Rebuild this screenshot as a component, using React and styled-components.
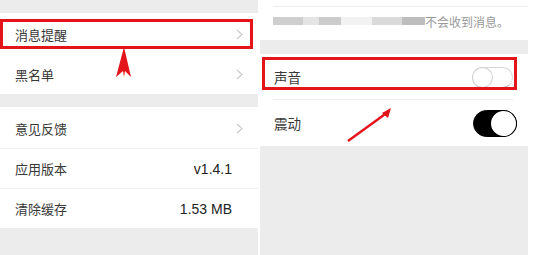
import styled, { createGlobalStyle } from 'styled-components';

const GlobalStyle = createGlobalStyle`
    body {
        margin: 0;
        background: #ffffff;
        font-family: "Liberation Sans", "Noto Sans CJK SC", sans-serif;
    }
`

const Chevron = () => (
    <ChevronIcon width="7" height="11" viewBox="0 0 7 11">
        <polyline points="1,1 6,5.5 1,10" fill="none" stroke="#c9c9c9" strokeWidth="1.1" />
    </ChevronIcon>
)

const SettingRow = ({ label, value, chevron, divider, children }) => (
    <Row $divider={divider}>
        <Label>{label}</Label>
        {value && <Value>{value}</Value>}
        {chevron && <Chevron />}
        {children}
    </Row>
)

const App = () => {
    return (
        <>
            <GlobalStyle />
            <Page>
                <Panel $width={258}>
                    <Spacer $height={13} />
                    <Group>
                        <SettingRow label="消息提醒" chevron>
                            <Highlight $left={0} $top={5} $width={253} $height={30} />
                        </SettingRow>
                        <SettingRow label="黑名单" chevron />
                    </Group>
                    <Spacer $height={13} />
                    <Group>
                        <SettingRow label="意见反馈" chevron />
                        <SettingRow label="应用版本" value="v1.4.1" divider />
                        <SettingRow label="清除缓存" value="1.53 MB" divider />
                    </Group>
                    <Overlay width="258" height="255" viewBox="0 0 258 255">
                        <path d="M124 47 L131 77 L125 71 L124 77 L123 71 L116 77 Z" fill="#e3151b" />
                    </Overlay>
                </Panel>

                <Panel $width={268}>
                    <NoticeBlock>
                        <TopLine />
                        <Notice>
                            <Blurred />
                            <span>不会收到消息。</span>
                        </Notice>
                    </NoticeBlock>
                    <Spacer $height={14} />
                    <Group>
                        <SwitchRow>
                            <Label $big>声音</Label>
                            <Toggle $on={false} />
                            <Highlight $left={2} $top={3} $width={255} $height={33} />
                        </SwitchRow>
                        <SwitchRow $divider>
                            <Label $big>震动</Label>
                            <Toggle $on />
                        </SwitchRow>
                    </Group>
                    <Overlay width="268" height="255" viewBox="0 0 268 255">
                        <line x1="88" y1="141" x2="128" y2="112" stroke="#e3151b" strokeWidth="2.4" />
                        <path d="M131 108 L128 118 L122 113 Z" fill="#e3151b" />
                    </Overlay>
                </Panel>
            </Page>
        </>
    );
};

const Page = styled.div`
    display: flex;
    gap: 2px;
    width: 534px;
    height: 255px;
    overflow: hidden;
`

const Panel = styled.div`
    position: relative;
    display: flex;
    flex-direction: column;
    width: ${props => props.$width}px;
    height: 255px;
    background: #ececec;
`

const Spacer = styled.div`
    height: ${props => props.$height}px;
    flex-shrink: 0;
`

const Group = styled.div`
    background: #ffffff;
`

const Row = styled.div`
    position: relative;
    display: flex;
    align-items: center;
    justify-content: space-between;
    height: 40px;
    padding: 0 15px 0 15px;
    border-top: 1px solid ${props => props.$divider ? "#f0f0f0" : "transparent"};
    box-sizing: border-box;

    &:first-child {
        height: 41px;
    }
`

const SwitchRow = styled(Row)`
    height: 46px;
    padding: 0 11px 0 14px;
    border-top: none;

    &:first-child {
        height: 46px;
    }

    &::before {
        content: "";
        display: ${props => props.$divider ? "block" : "none"};
        position: absolute;
        top: -1px;
        left: 13px;
        right: 15px;
        border-top: 1px solid #efefef;
    }
`

const Label = styled.span`
    font-size: ${props => props.$big ? "13.5px" : "13px"};
    color: #383838;
`

const Value = styled.span`
    font-size: 14px;
    color: #222222;
    margin-right: 11px;
`

const ChevronIcon = styled.svg`
    display: block;
`

const Highlight = styled.div`
    position: absolute;
    left: ${props => props.$left}px;
    top: ${props => props.$top}px;
    width: ${props => props.$width}px;
    height: ${props => props.$height}px;
    border: 3px solid #e3151b;
    box-sizing: border-box;
    pointer-events: none;
`

const Toggle = styled.div`
    position: relative;
    width: ${props => props.$on ? "44px" : "41px"};
    height: ${props => props.$on ? "27px" : "21px"};
    margin-right: ${props => props.$on ? "0" : "4px"};
    border-radius: 14px;
    box-sizing: border-box;
    background: ${props => props.$on ? "#000000" : "#ffffff"};
    border: 1px solid ${props => props.$on ? "#000000" : "#d6d6d6"};
    border-bottom-color: ${props => props.$on ? "#000000" : "#b8b8b8"};

    &::after {
        content: "";
        position: absolute;
        top: 0px;
        ${props => props.$on ? "right: 0px;" : "left: 0px;"}
        width: ${props => props.$on ? "25px" : "19px"};
        height: ${props => props.$on ? "25px" : "19px"};
        border-radius: 50%;
        background: #ffffff;
        box-shadow: ${props => props.$on ? "0 0 0 1px #000" : "0 0 0 1px #d0d0d0"};
    }
`

const NoticeBlock = styled.div`
    background: #ffffff;
    height: 40px;
    flex-shrink: 0;
`

const TopLine = styled.div`
    margin: 6px 0 0 13px;
    border-top: 1px solid #eeeeee;
`

const Notice = styled.div`
    display: flex;
    align-items: center;
    height: 34px;
    padding-left: 13px;
    margin-top: -3px;
    font-size: 12px;
    color: #999999;
`

const Blurred = styled.span`
    display: inline-block;
    width: 152px;
    height: 8px;
    background: linear-gradient(90deg, #cfcfcf 0 20%, #e4e4e4 20% 30%, #cbcbcb 30% 45%, #f2f2f2 45% 65%, #dadada 65% 85%, #bdbdbd 85% 100%);
`

const Overlay = styled.svg`
    position: absolute;
    left: 0;
    top: 0;
    pointer-events: none;
`

export default App;
